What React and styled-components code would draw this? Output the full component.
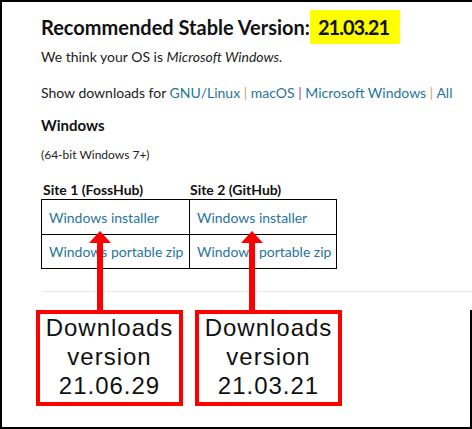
import React from "react";
import styled, { createGlobalStyle } from "styled-components";

const GlobalStyle = createGlobalStyle`
  html, body {
    margin: 0;
    padding: 0;
    background: #fff;
  }
`;

const Frame = styled.div`
  width: 472px;
  height: 429px;
  box-sizing: border-box;
  border-top: 2px solid #000;
  border-left: 2px solid #000;
  border-bottom: 2px solid #000;
  display: flex;
  flex-direction: column;
  font-family: Lato, "Open Sans", sans-serif;
  color: #222;
  overflow: hidden;
`;

const Content = styled.div`
  padding: 8px 0 0 39px;
`;

const Heading = styled.h2`
  margin: 0;
  font-size: 20px;
  font-weight: 700;
  line-height: 34px;
  color: #111;
`;

const Highlight = styled.span`
  display: inline-block;
  background: #ffff00;
  padding: 0 11px 0 8px;
  letter-spacing: -1px;
`;

const Text = styled.p`
  margin: ${(p) => p.$mt || 0}px 0 0;
  font-size: ${(p) => p.$size || 14}px;
  line-height: 18px;
`;

const Link = styled.a`
  color: #27769a;
  text-decoration: none;
`;

const Sep = styled.span`
  color: ${(p) => p.$color};
`;

const SubHeading = styled.h3`
  margin: ${(p) => p.$mt || 0}px 0 0;
  font-size: 15px;
  font-weight: 700;
  line-height: 18px;
  color: #111;
`;

const Sites = styled.div`
  margin-top: 17px;
  display: grid;
  grid-template-columns: 148px 148px;
`;

const SiteTitle = styled.div`
  font-size: 14px;
  font-weight: 700;
  line-height: 18px;
  color: #111;
  padding-left: ${(p) => (p.$inner ? 1 : 2)}px;
`;

const Cell = styled.div`
  height: 35px;
  box-sizing: border-box;
  display: flex;
  align-items: center;
  padding-left: 7px;
  border-left: 1px solid #000;
  border-top: 1px solid #000;
  border-right: ${(p) => (p.$last ? "1px solid #000" : "none")};
  border-bottom: ${(p) => (p.$bottom ? "1px solid #000" : "none")};
  font-size: 14px;
`;

const Rule = styled.div`
  margin: 22px 0 0 41px;
  height: 1px;
  background: #e8e8e8;
`;

const Annotations = styled.div`
  flex: 1;
  display: flex;
  gap: 12px;
  margin-top: 18px;
  padding-left: 34px;
  border-right: 2px solid #000;
`;

const Callout = styled.div`
  position: relative;
  width: 147px;
  height: 96px;
  box-sizing: border-box;
  border: 4px solid #ff0000;
  display: flex;
  flex-direction: column;
  align-items: center;
  justify-content: center;
  padding-bottom: 3px;
  font-family: "Liberation Sans", Arial, sans-serif;
  font-size: 24px;
  line-height: 29px;
  letter-spacing: 1px;
  color: #111;
`;

const Arrow = styled.svg`
  position: absolute;
  bottom: 100%;
  margin-bottom: 4px;
  left: ${(p) => p.$x}px;
`;

function UpArrow({ x }) {
  return (
    <Arrow $x={x} width="22" height="79" viewBox="0 0 22 79">
      <polygon points="11,0 22,12 0,12" fill="#ff0000" />
      <rect x="8" y="11" width="6" height="68" fill="#ff0000" />
    </Arrow>
  );
}

const sites = [
  { title: "Site 1 (FossHub)", version: "21.06.29", arrowX: 49 },
  { title: "Site 2 (GitHub)", version: "21.03.21", arrowX: 42 },
];

export default function App() {
  return (
    <>
      <GlobalStyle />
      <Frame>
        <Content>
          <Heading>
            Recommended Stable Version:<Highlight>21.03.21</Highlight>
          </Heading>
          <Text $mt={4}>
            We think your OS is <em>Microsoft Windows.</em>
          </Text>
          <Text $mt={18}>
            Show downloads for <Link>GNU/Linux</Link> <Sep $color="#e0a060">|</Sep>{" "}
            <Link>macOS</Link> <Sep $color="#8a50a8">|</Sep>{" "}
            <Link>Microsoft Windows</Link> <Sep $color="#e0a060">|</Sep>{" "}
            <Link>All</Link>
          </Text>
          <SubHeading $mt={14}>Windows</SubHeading>
          <Text $mt={12} $size={12}>
            (64-bit Windows 7+)
          </Text>
          <Sites>
            <SiteTitle>{sites[0].title}</SiteTitle>
            <SiteTitle $inner>{sites[1].title}</SiteTitle>
            <Cell><Link>Windows installer</Link></Cell>
            <Cell $last><Link>Windows installer</Link></Cell>
            <Cell $bottom><Link>Windows portable zip</Link></Cell>
            <Cell $bottom $last><Link>Windows portable zip</Link></Cell>
          </Sites>
        </Content>
        <Rule />
        <Annotations>
          {sites.map((s) => (
            <Callout key={s.title}>
              <UpArrow x={s.arrowX} />
              <span>Downloads</span>
              <span>version</span>
              <span>{s.version}</span>
            </Callout>
          ))}
        </Annotations>
      </Frame>
    </>
  );
}
